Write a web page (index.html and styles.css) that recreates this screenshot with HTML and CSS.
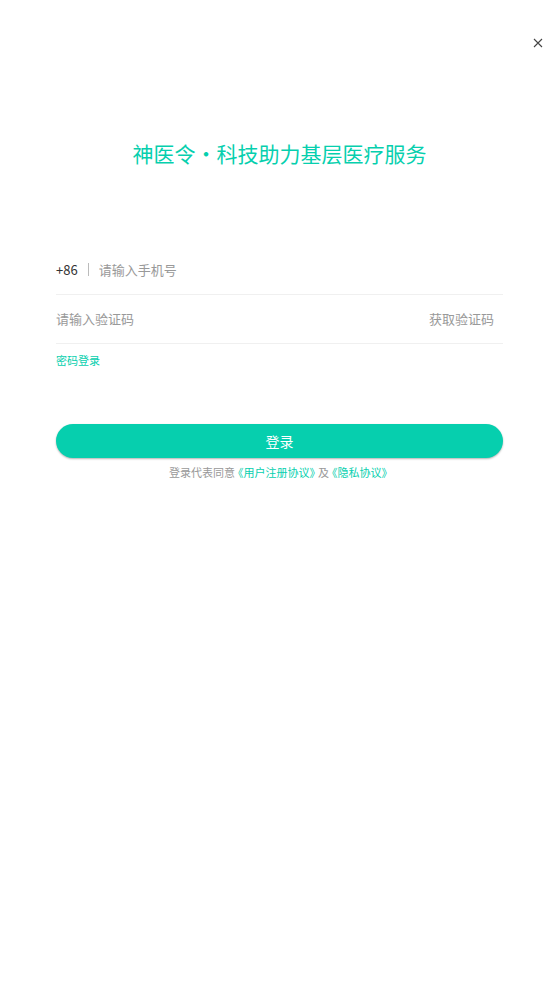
FILE: index.html
```html
<!DOCTYPE html>
<html lang="zh-CN">
<head>
<meta charset="utf-8">
<meta name="viewport" content="width=device-width, initial-scale=1">
<title>登录</title>
<link rel="stylesheet" href="styles.css">
</head>
<body>
<header class="topbar">
  <button class="close" type="button" aria-label="关闭">
    <svg width="10" height="10" viewBox="0 0 10 10" aria-hidden="true"><path d="M1 1l8 8M9 1l-8 8" fill="none" stroke="#444" stroke-width="1.1"/></svg>
  </button>
</header>
<main class="page">
  <h1 class="title">神医令・科技助力基层医疗服务</h1>
  <form class="form">
    <div class="field">
      <label class="prefix" for="phone">+86</label>
      <input class="input" id="phone" type="tel" placeholder="请输入手机号">
    </div>
    <div class="field">
      <input class="input" id="code" type="text" placeholder="请输入验证码" aria-label="验证码">
      <button class="get-code" type="button">获取验证码</button>
    </div>
    <a class="switch" href="#">密码登录</a>
    <button class="submit" type="submit">登录</button>
    <p class="terms">登录代表同意<a href="#">《用户注册协议》</a>及<a href="#">《隐私协议》</a></p>
  </form>
</main>
</body>
</html>
```
FILE: styles.css
```css
* { box-sizing: border-box; }
body {
  margin: 0;
  background: #fff;
  color: #999;
  font-family: "Noto Sans CJK SC", sans-serif;
  font-size: 13px;
}
button, input {
  padding: 0;
  border: 0;
  background: none;
  color: inherit;
  font: inherit;
}
a { color: #06cfae; text-decoration: none; }
.topbar {
  display: flex;
  justify-content: flex-end;
  padding: 35px 13px 0;
}
.close { display: flex; padding: 3px; }
.page { padding: 88px 56px 0; }
.title {
  margin: 0;
  color: #06cfae;
  font-size: 21px;
  font-weight: 400;
  line-height: 28px;
  text-align: center;
}
.form {
  display: flex;
  flex-direction: column;
  padding-top: 79px;
}
.field {
  display: flex;
  align-items: center;
  height: 49px;
  padding-bottom: 1px;
  border-bottom: 1px solid #f0f0f0;
}
.prefix {
  margin-right: 10px;
  padding-right: 10px;
  border-right: 1px solid #bbb;
  color: #333;
  line-height: 13px;
}
.input { flex: 1; min-width: 0; height: 32px; outline: 0; }
.input::placeholder { color: #999; opacity: 1; }
.get-code { padding: 0 9px; line-height: 18px; }
.switch { align-self: flex-start; margin-top: 8px; font-size: 11px; line-height: 16px; }
.submit {
  height: 34px;
  margin-top: 56px;
  border-radius: 17px;
  background: #06cfae;
  box-shadow: 0 1px 2px rgba(0, 0, 0, .3);
  color: #fff;
  font-size: 14px;
  line-height: 20px;
}
.terms { margin: 6px 0 0; font-size: 11px; line-height: 16px; text-align: center; }
.terms a { margin: 0 3px; font-feature-settings: "halt"; }
```
